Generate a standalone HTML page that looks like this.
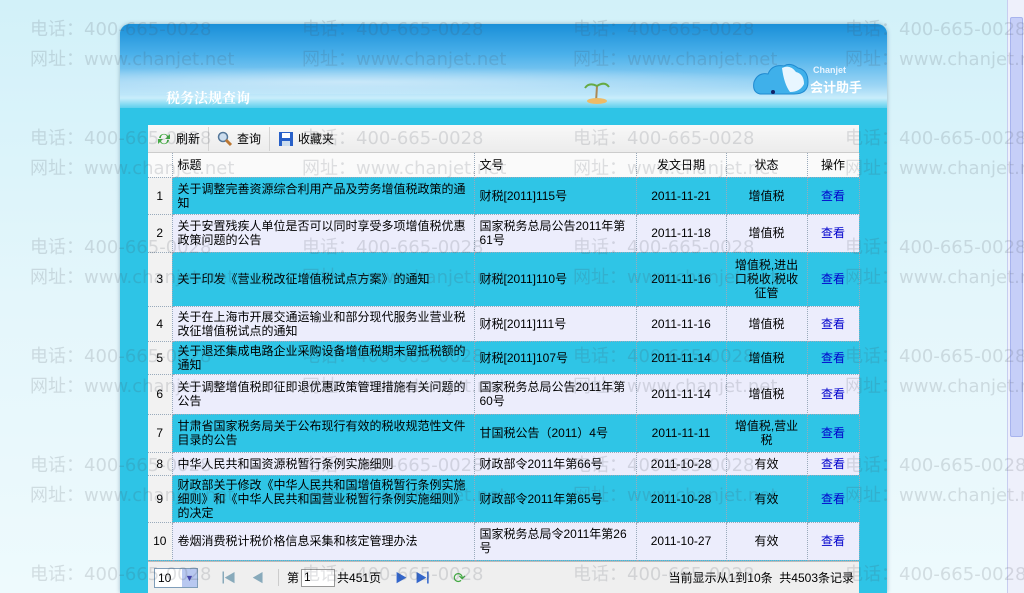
<!DOCTYPE html>
<html style="overflow:hidden;height:593px"><head><meta charset="utf-8"><style>
*{margin:0;padding:0;box-sizing:border-box}
html,body{width:1024px;height:593px;overflow:hidden}
body{position:relative;background:linear-gradient(#d2f1f9,#e4f6fb 300px,#eefafd);font-family:"Liberation Sans","Noto Sans CJK SC",sans-serif;font-size:12px;color:#000}
.sb{position:absolute;left:1007px;top:0;width:17px;height:593px;background:#eef0fb;border-left:1px solid #c8cdf0}
.sb .t{position:absolute;left:2px;top:17px;width:13px;height:420px;background:#c6cff8;border:1px solid #a8b4ee;border-radius:2px}
.panel{position:absolute;left:120px;top:24px;width:767px;height:569px;border-radius:10px 10px 0 0;background:#2ec4e6;box-shadow:0 0 4px rgba(0,60,100,.35);overflow:hidden}
.hd{position:absolute;left:0;top:0;width:767px;height:84px;background:linear-gradient(#1a8fd8 0,#4ab0ea 30px,#9ed6f5 62px,#c9edfb 74px,#5ccfee 84px)}
.hd .cl{position:absolute;left:0;top:40px;width:767px;height:30px;background:radial-gradient(ellipse at 30% 60%,rgba(255,255,255,.5),transparent 60%)}
.title{position:absolute;left:46px;top:64px;color:#fff;font-family:"Liberation Serif","Noto Serif CJK SC",serif;font-weight:bold;font-size:14px}
.logo{position:absolute;left:632px;top:36px}
.grid{position:absolute;left:148px;top:125px;width:711px}
.tb{height:28px;background:linear-gradient(#f8f8f8,#ececec);border-bottom:1px solid #ccc;display:flex;align-items:center;padding-left:6px;font-size:12px}
.tb span{display:flex;align-items:center;padding:0 8px 0 2px;height:24px;border-right:1px solid #d4d4d4;margin-right:6px}
.tb i{display:inline-block;width:16px;height:16px;margin-right:4px}
table{border-collapse:collapse;width:711px;table-layout:fixed}
td,th{border-right:1px dotted #9ab;border-bottom:1px dotted #9ab;font-weight:normal;padding:0 5px;line-height:14px;vertical-align:middle}
th{height:24px;background:#fafafa;text-align:center}
td{text-align:center}
td.l,th.l{text-align:left}
td.n{background:#f2f2f2;padding:0}
tr.c td{background:#2fc5e6}
tr.w td{background:#ecedfc}
tr td.n{background:#f2f2f2}
a{color:#00c;text-decoration:none}
.pg{height:33px;background:#efefef;border-top:1px solid #bbb;display:flex;align-items:center;font-size:12px;position:relative}
.wm{position:absolute;color:rgba(70,80,90,.17);font-family:"DejaVu Sans","Noto Sans CJK SC",sans-serif;font-size:18px;white-space:nowrap;pointer-events:none;line-height:30px}
</style></head><body>
<div class="sb"><div class="t"></div></div>
<div class="panel">
 <div class="hd"><div class="cl"></div></div>
 <div class="title">税务法规查询</div>
 <svg style="position:absolute;left:462px;top:50px" width="30" height="30"><path d="M14 28 L15 12" stroke="#a85" stroke-width="2"/><path d="M15 12 q-8 -4 -12 2 M15 12 q8 -5 12 1" stroke="#6a4" stroke-width="2" fill="none"/><ellipse cx="15" cy="27" rx="10" ry="3" fill="#eb6"/></svg>
 <svg class="logo" width="60" height="40"><path d="M8 34 q-8 -2 -6 -12 q4 -10 14 -8 q4 -10 16 -8 q6 -4 14 2 q10 2 10 14 q0 12 -14 12 z" fill="#3fb0ea" stroke="#1f8ad0"/><path d="M30 8 q8 -4 14 4 q8 2 8 12 q-4 8 -14 8 q-6 -8 -8 -24z" fill="#e8f6ff"/><circle cx="21" cy="32" r="2" fill="#126"/></svg>
 <div style="position:absolute;left:693px;top:41px;color:#e8f4ff;font-size:9px;font-weight:bold">Chanjet</div>
 <div style="position:absolute;left:690px;top:53px;color:#fff;font-size:13px;font-weight:bold">会计助手</div>
</div>
<div class="grid">
 <div class="tb">
  <span><i><svg width="16" height="16"><path d="M3 7 a5 5 0 0 1 9 -2 l2 -2 v5 h-5 l2 -2 a3 3 0 0 0 -6 1z M13 9 a5 5 0 0 1 -9 2 l-2 2 v-5 h5 l-2 2 a3 3 0 0 0 6 -1z" fill="#4a4"/></svg></i>刷新</span>
  <span><i><svg width="16" height="16"><circle cx="6" cy="6" r="4.5" fill="#cde" stroke="#579" stroke-width="1.5"/><path d="M9 9 l5 5" stroke="#b73" stroke-width="3"/></svg></i>查询</span>
  <span style="border:0"><i><svg width="16" height="16"><rect x="1" y="1" width="14" height="14" fill="#2860c8"/><rect x="4" y="2" width="8" height="5" fill="#fff"/><rect x="4" y="10" width="8" height="5" fill="#cde"/></svg></i>收藏夹</span>
 </div>
 <table>
  <colgroup><col style="width:24px"><col style="width:302px"><col style="width:162px"><col style="width:90px"><col style="width:81px"><col style="width:52px"></colgroup>
  <tr><th></th><th class="l">标题</th><th class="l">文号</th><th>发文日期</th><th>状态</th><th>操作</th></tr>
  <tr class="c" style="height:37px"><td class="n">1</td><td class="l">关于调整完善资源综合利用产品及劳务增值税政策的通知</td><td class="l">财税[2011]115号</td><td>2011-11-21</td><td>增值税</td><td><a>查看</a></td></tr>
  <tr class="w" style="height:38px"><td class="n">2</td><td class="l">关于安置残疾人单位是否可以同时享受多项增值税优惠政策问题的公告</td><td class="l">国家税务总局公告2011年第61号</td><td>2011-11-18</td><td>增值税</td><td><a>查看</a></td></tr>
  <tr class="c" style="height:54px"><td class="n">3</td><td class="l">关于印发《营业税改征增值税试点方案》的通知</td><td class="l">财税[2011]110号</td><td>2011-11-16</td><td>增值税,进出口税收,税收征管</td><td><a>查看</a></td></tr>
  <tr class="w" style="height:35px"><td class="n">4</td><td class="l">关于在上海市开展交通运输业和部分现代服务业营业税改征增值税试点的通知</td><td class="l">财税[2011]111号</td><td>2011-11-16</td><td>增值税</td><td><a>查看</a></td></tr>
  <tr class="c" style="height:33px"><td class="n">5</td><td class="l">关于退还集成电路企业采购设备增值税期末留抵税额的通知</td><td class="l">财税[2011]107号</td><td>2011-11-14</td><td>增值税</td><td><a>查看</a></td></tr>
  <tr class="w" style="height:40px"><td class="n">6</td><td class="l">关于调整增值税即征即退优惠政策管理措施有关问题的公告</td><td class="l">国家税务总局公告2011年第60号</td><td>2011-11-14</td><td>增值税</td><td><a>查看</a></td></tr>
  <tr class="c" style="height:38px"><td class="n">7</td><td class="l">甘肃省国家税务局关于公布现行有效的税收规范性文件目录的公告</td><td class="l">甘国税公告（2011）4号</td><td>2011-11-11</td><td>增值税,营业税</td><td><a>查看</a></td></tr>
  <tr class="w" style="height:23px"><td class="n">8</td><td class="l">中华人民共和国资源税暂行条例实施细则</td><td class="l">财政部令2011年第66号</td><td>2011-10-28</td><td>有效</td><td><a>查看</a></td></tr>
  <tr class="c" style="height:47px"><td class="n">9</td><td class="l">财政部关于修改《中华人民共和国增值税暂行条例实施细则》和《中华人民共和国营业税暂行条例实施细则》的决定</td><td class="l">财政部令2011年第65号</td><td>2011-10-28</td><td>有效</td><td><a>查看</a></td></tr>
  <tr class="w" style="height:38px"><td class="n">10</td><td class="l">卷烟消费税计税价格信息采集和核定管理办法</td><td class="l">国家税务总局令2011年第26号</td><td>2011-10-27</td><td>有效</td><td><a>查看</a></td></tr>
 </table>
 <div class="pg">
  <div style="margin-left:6px;width:44px;height:20px;border:1px solid #7f9db9;background:#fff;display:flex;align-items:center;padding-left:3px">10<span style="margin-left:auto;width:15px;height:18px;background:#b8c8f0;display:inline-block;color:#44a;font-size:9px;text-align:center;line-height:18px">▼</span></div>
  <span style="margin-left:14px;color:#8ab">▕◀</span><span style="margin-left:16px;color:#8ab">◀</span>
  <span style="margin-left:14px;border-left:1px solid #ccc;padding-left:8px">第</span><span style="width:34px;height:18px;border:1px solid #999;background:#fff;margin:0 2px;padding-left:2px">1</span>共451页
  <span style="margin-left:14px;color:#36c">▶</span><span style="margin-left:8px;color:#36c">▶▏</span>
  <span style="margin-left:14px;color:#4a4;font-size:15px">⟳</span>
  <span style="margin-left:auto;margin-right:5px">当前显示从1到10条&nbsp;&nbsp;共4503条记录</span>
 </div>
</div>
<div id="wm"></div>
<script>
var h='';var xs=[30,302,573,845],ys=[15,124,233,342,451,560];
ys.forEach(function(y){xs.forEach(function(x){h+='<div class="wm" style="left:'+x+'px;top:'+y+'px">电话：400-665-0028</div><div class="wm" style="left:'+x+'px;top:'+(y+30)+'px">网址：www.chanjet.net</div>';});});
document.getElementById('wm').innerHTML=h;
</script>
</body></html>
